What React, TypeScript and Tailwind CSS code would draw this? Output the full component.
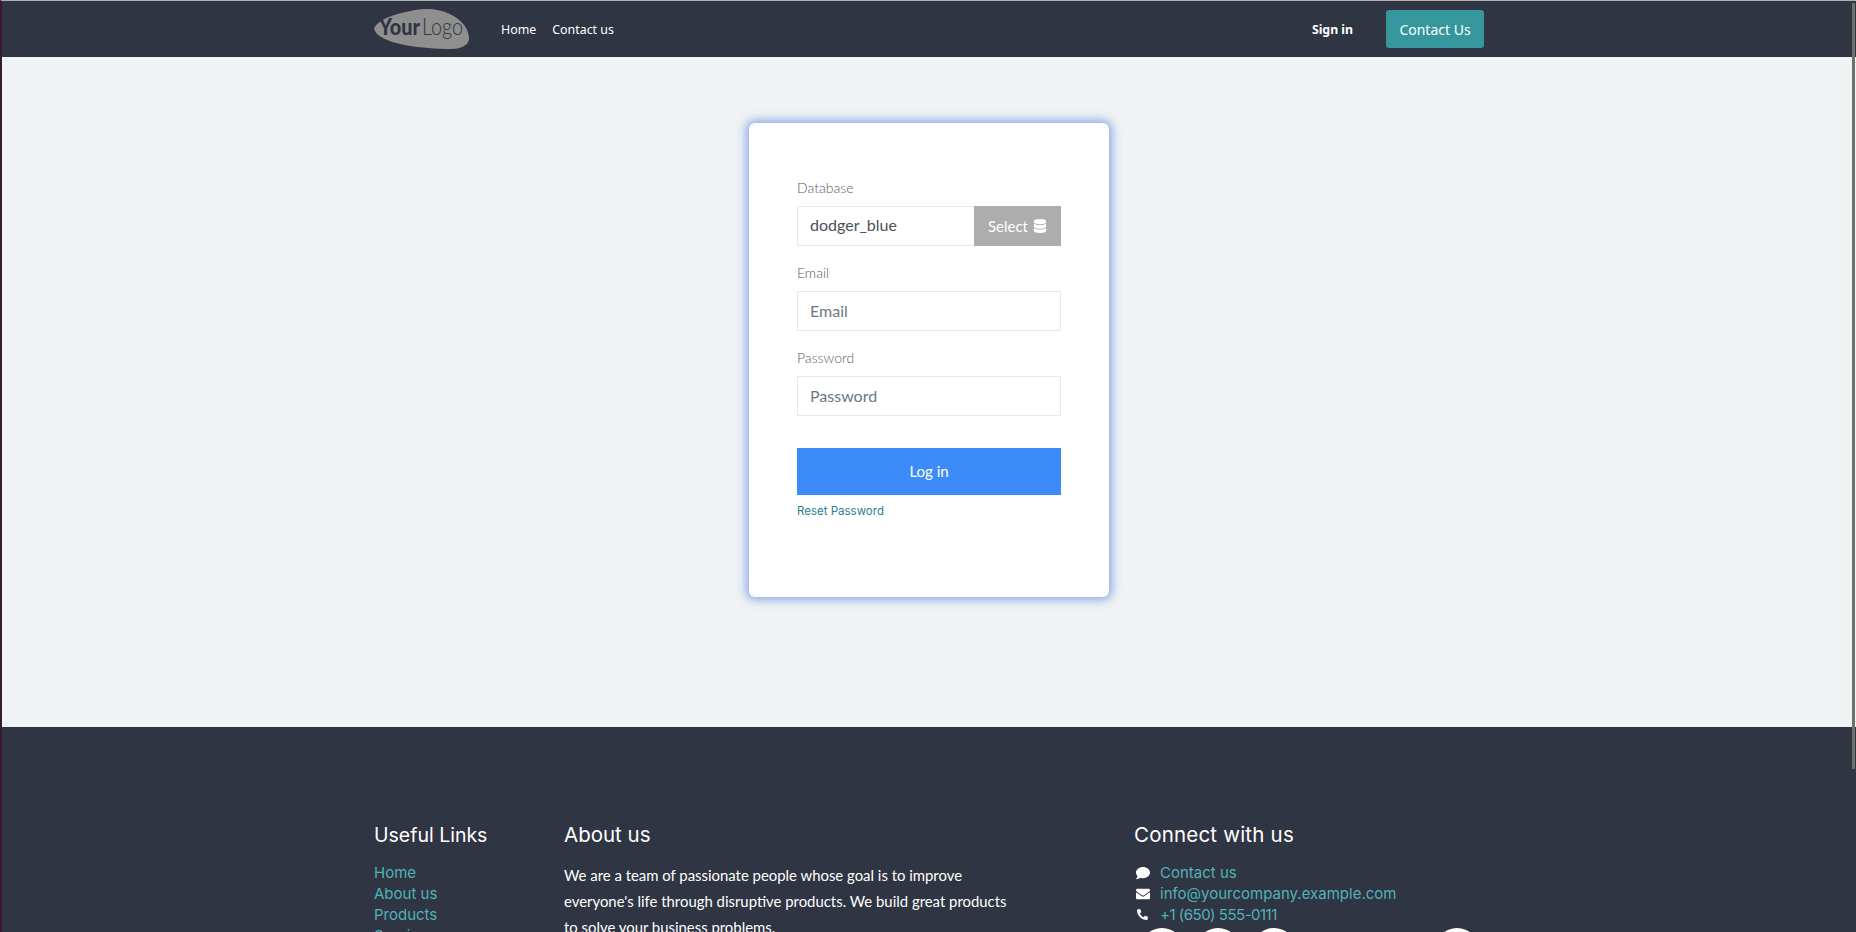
import { FaComment, FaDatabase, FaEnvelope, FaPhoneAlt } from "react-icons/fa";

const poppins = "font-['Inter',sans-serif]";
const lato = "font-['Lato',sans-serif]";
const navFont = "font-['Noto_Sans',sans-serif]";
const labelClass = `${lato} block text-[14px] font-light leading-[21px] mb-[8px] text-[#555e68]`;

const YourLogo = () => (
  <svg width="96" height="41" viewBox="0 0 96 41" className="block">
    <path
      d="M0 20 C3 11 22 3 50 0 C74 -1 94 13 95 28 C96 38 84 40.5 70 40 C44 39 5 35 0 20 Z"
      fill="#8f8f8f"
    />
    <text x="5" y="26" fontFamily="Lato, sans-serif" fontWeight="900" fontSize="23" textLength="41" lengthAdjust="spacingAndGlyphs" fill="#2f3542">
      Your
    </text>
    <text x="48" y="26" fontFamily="Lato, sans-serif" fontWeight="300" fontSize="23" textLength="41" lengthAdjust="spacingAndGlyphs" fill="#2f3542">
      Logo
    </text>
  </svg>
);

const Field = ({ label, placeholder }: { label: string; placeholder: string }) => (
  <div className="mb-[16px]">
    <label className={labelClass}>{label}</label>
    <input
      placeholder={placeholder}
      className={`${lato} w-full h-[40px] px-[12px] pb-[2px] border border-[#e4e9ee] bg-white text-[16px] outline-none placeholder:text-[#6b7785]`}
    />
  </div>
);

export default function App() {
  return (
    <div className="h-[932px] overflow-hidden bg-[#2f3542] border-t border-[#b0b0b0] border-l-2 border-l-[#3a1a2e] relative">
      <header className="h-[56px] bg-[#2f3542] flex items-center pl-[372px] pr-[372px]">
        <YourLogo />
        <nav className={`${navFont} flex gap-[16px] ml-[31px] pt-[2px] text-[12.4px] text-white`}>
          <a>Home</a>
          <a>Contact us</a>
        </nav>
        <a className={`${navFont} ml-auto pt-[2px] text-[12.3px] font-bold text-white`}>Sign in</a>
        <button className={`${navFont} ml-[33px] h-[38px] w-[98px] rounded-[3px] bg-[#35979c] text-white text-[14px]`}>
          Contact Us
        </button>
      </header>

      {/* Login card */}
      <main className="h-[670px] bg-[#eff3f4] flex justify-center pt-[66px]">
        <div className="w-[360px] h-[474px] bg-white rounded-[6px] px-[48px] pt-[54px] shadow-[0_0_10px_3px_rgba(60,110,220,0.55)]">
          <div className="mb-[16px]">
            <label className={labelClass}>Database</label>
            <div className="flex h-[40px]">
              <input
                readOnly
                value="dodger_blue"
                className={`${lato} flex-1 min-w-0 px-[12px] pb-[2px] border border-[#e4e9ee] border-r-0 text-[16px] text-[#495057] outline-none`}
              />
              <button className={`${lato} w-[87px] bg-[#adadad] text-white text-[15px] flex items-center justify-center gap-[5px]`}>
                Select <FaDatabase size={14} />
              </button>
            </div>
          </div>
          <Field label="Email" placeholder="Email" />
          <Field label="Password" placeholder="Password" />
          <button className={`${lato} w-full h-[47px] mt-[16px] bg-[#3d8bf8] text-white text-[15px]`}>Log in</button>
          <a className={`${poppins} block mt-[8px] leading-[16px] text-[11.5px] text-[#2b7f8f]`}>Reset Password</a>
        </div>
      </main>

      {/* Footer, runs past the bottom of the window */}
      <footer className="flex pl-[372px] pt-[96px]">
        <div className="w-[190px]">
          <h5 className={`${poppins} text-[19.5px] text-white leading-[24px] mb-[15px]`}>Useful Links</h5>
          <ul className={`${poppins} text-[15px] leading-[21px] text-[#4fb3b8]`}>
            <li>Home</li>
            <li>About us</li>
            <li>Products</li>
            <li>Services</li>
          </ul>
        </div>
        <div className="w-[570px]">
          <h5 className={`${poppins} text-[20.5px] text-white leading-[24px] mb-[15px]`}>About us</h5>
          <p className={`${lato} w-[450px] text-[14.9px] leading-[26px] text-white`}>
            We are a team of passionate people whose goal is to improve everyone's life through disruptive products. We build great products to solve your business problems.
          </p>
        </div>
        <div>
          <h5 className={`${poppins} text-[20.5px] tracking-[0.2px] text-white leading-[24px] mb-[15px]`}>Connect with us</h5>
          <ul className={`${poppins} text-[15px] leading-[21px] text-[#4fb3b8]`}>
            <li className="flex items-center">
              <span className="w-[26px] pl-[2px] text-white"><FaComment size={14} /></span>
              Contact us
            </li>
            <li className="flex items-center">
              <span className="w-[26px] pl-[2px] text-white"><FaEnvelope size={14} /></span>
              info@yourcompany.example.com
            </li>
            <li className="flex items-center tracking-[-0.5px]">
              <span className="w-[26px] pl-[3px] text-white"><FaPhoneAlt size={11} /></span>
              +1 (650) 555-0111
            </li>
          </ul>
          <div className="flex gap-[12px] mt-[3px] ml-[6px]">
            <a className="w-[44px] h-[44px] rounded-full bg-white" />
            <a className="w-[44px] h-[44px] rounded-full bg-white" />
            <a className="w-[44px] h-[44px] rounded-full bg-white" />
            <a className="w-[44px] h-[44px] rounded-full bg-white ml-[127px]" />
          </div>
        </div>
      </footer>

      {/* Scrollbar thumb */}
      <div className="absolute right-[1px] top-[2px] w-[3px] h-[766px] bg-[#6f6f6f]" />
    </div>
  );
}
